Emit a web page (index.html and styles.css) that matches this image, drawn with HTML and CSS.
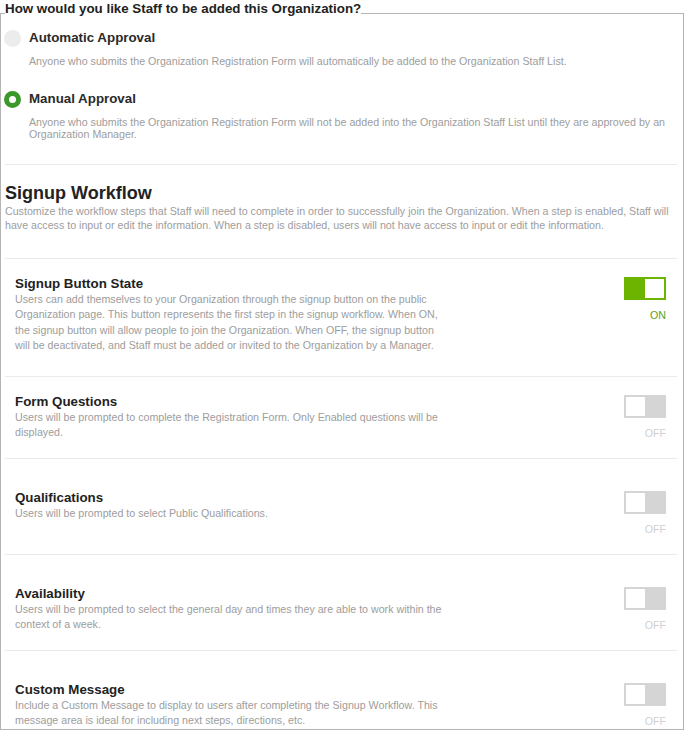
FILE: index.html
```html
<!DOCTYPE html>
<html>
<head>
<meta charset="utf-8">
<link rel="stylesheet" href="styles.css">
</head>
<body>
<fieldset class="frame">
  <legend class="question">How would you like Staff to be added this Organization?</legend>

  <div class="option">
    <span class="radio"></span>
    <div class="option-title">Automatic Approval</div>
    <p class="option-desc">Anyone who submits the Organization Registration Form will automatically be added to the Organization Staff List.</p>
  </div>

  <div class="option option--second">
    <span class="radio radio--on"></span>
    <div class="option-title">Manual Approval</div>
    <p class="option-desc">Anyone who submits the Organization Registration Form will not be added into the Organization Staff List until they are approved by an Organization Manager.</p>
  </div>

  <hr class="sep sep--top">

  <h2 class="section-title">Signup Workflow</h2>
  <p class="section-desc">Customize the workflow steps that Staff will need to complete in order to successfully join the Organization. When a step is enabled, Staff will have access to input or edit the information. When a step is disabled, users will not have access to input or edit the information.</p>

  <hr class="sep">

  <div class="row row--first">
    <div class="row-text">
      <div class="row-title">Signup Button State</div>
      <p class="row-desc">Users can add themselves to your Organization through the signup button on the public Organization page. This button represents the first step in the signup workflow. When ON, the signup button will allow people to join the Organization. When OFF, the signup button will be deactivated, and Staff must be added or invited to the Organization by a Manager.</p>
    </div>
    <div class="switch-col">
      <span class="switch switch--on"><span class="knob"></span></span>
      <span class="state state--on">ON</span>
    </div>
  </div>

  <hr class="sep">

  <div class="row">
    <div class="row-text">
      <div class="row-title">Form Questions</div>
      <p class="row-desc">Users will be prompted to complete the Registration Form. Only Enabled questions will be displayed.</p>
    </div>
    <div class="switch-col">
      <span class="switch"><span class="knob"></span></span>
      <span class="state">OFF</span>
    </div>
  </div>

  <hr class="sep">

  <div class="row row--spaced">
    <div class="row-text">
      <div class="row-title">Qualifications</div>
      <p class="row-desc">Users will be prompted to select Public Qualifications.</p>
    </div>
    <div class="switch-col">
      <span class="switch"><span class="knob"></span></span>
      <span class="state">OFF</span>
    </div>
  </div>

  <hr class="sep">

  <div class="row row--spaced">
    <div class="row-text">
      <div class="row-title">Availability</div>
      <p class="row-desc">Users will be prompted to select the general day and times they are able to work within the context of a week.</p>
    </div>
    <div class="switch-col">
      <span class="switch"><span class="knob"></span></span>
      <span class="state">OFF</span>
    </div>
  </div>

  <hr class="sep">

  <div class="row row--spaced">
    <div class="row-text">
      <div class="row-title">Custom Message</div>
      <p class="row-desc">Include a Custom Message to display to users after completing the Signup Workflow. This message area is ideal for including next steps, directions, etc.</p>
    </div>
    <div class="switch-col">
      <span class="switch"><span class="knob"></span></span>
      <span class="state">OFF</span>
    </div>
  </div>
</fieldset>
</body>
</html>
```

FILE: styles.css
```css
* { box-sizing: border-box; }
html, body { margin: 0; padding: 0; background: #fff; }
body {
  font-family: "Liberation Sans", Arial, Helvetica, sans-serif;
  color: #222;
  width: 684px;
  height: 730px;
  overflow: hidden;
}
p { margin: 0; }

.frame {
  margin: 0;
  padding: 0 6px 0 4px;
  border: 1px solid #b4b4b4;
  width: 684px;
  height: 730px;
  min-width: 0;
  overflow: hidden;
}

.question {
  padding: 0 0 9px;
  margin: 0;
  font-size: 13.33px;
  line-height: 17px;
  font-weight: bold;
  color: #222;
}

.option {
  display: grid;
  grid-template-columns: 17px 1fr;
  column-gap: 8px;
  margin-top: 3px;
  margin-left: -1px;
}
.option--second { margin-top: 23px; }

.radio {
  width: 17px;
  height: 17px;
  border-radius: 50%;
  background: #ececec;
  margin-top: 1px;
}
.radio--on {
  background: #fff;
  border: 5px solid #3b982a;
}
.option-title {
  font-size: 13.33px;
  line-height: 18px;
  font-weight: bold;
  color: #2a2a2a;
}
.option-desc {
  grid-column: 2;
  margin-top: 8px;
  font-size: 10.67px;
  line-height: 12px;
  color: #9d9d9d;
}

.sep {
  margin: 0;
  border: 0;
  border-top: 1px solid #ebebeb;
  height: 0;
}
.sep--top { margin-top: 24px; }

.section-title {
  margin: 17px 0 0;
  font-size: 18px;
  line-height: 22px;
  font-weight: bold;
  color: #222;
}
.section-desc {
  font-size: 10.67px;
  line-height: 14px;
  color: #9d9d9d;
  margin-bottom: 26px;
}

.row {
  display: flex;
  justify-content: space-between;
  align-items: flex-start;
  padding: 17px 11px 17px 10px;
}
.row--first { padding-bottom: 23px; }
.row--spaced { padding-top: 31px; }

.row-text { width: 430px; }
.row-title {
  font-size: 13.33px;
  line-height: 16px;
  font-weight: bold;
  color: #222;
}
.row-desc {
  font-size: 10.67px;
  line-height: 15.3px;
  color: #9d9d9d;
}

.switch-col {
  display: flex;
  flex-direction: column;
  align-items: flex-end;
  padding-top: 1px;
}
.switch {
  display: flex;
  width: 42px;
  height: 23px;
  padding: 2px;
  background: #d5d5d5;
  justify-content: flex-start;
}
.switch--on {
  background: #6db400;
  justify-content: flex-end;
}
.knob {
  width: 19px;
  height: 19px;
  background: #fff;
}
.state {
  margin-top: 8px;
  font-size: 10.67px;
  line-height: 15px;
  color: #cfcfcf;
}
.state--on { color: #5d9f1c; }
```
